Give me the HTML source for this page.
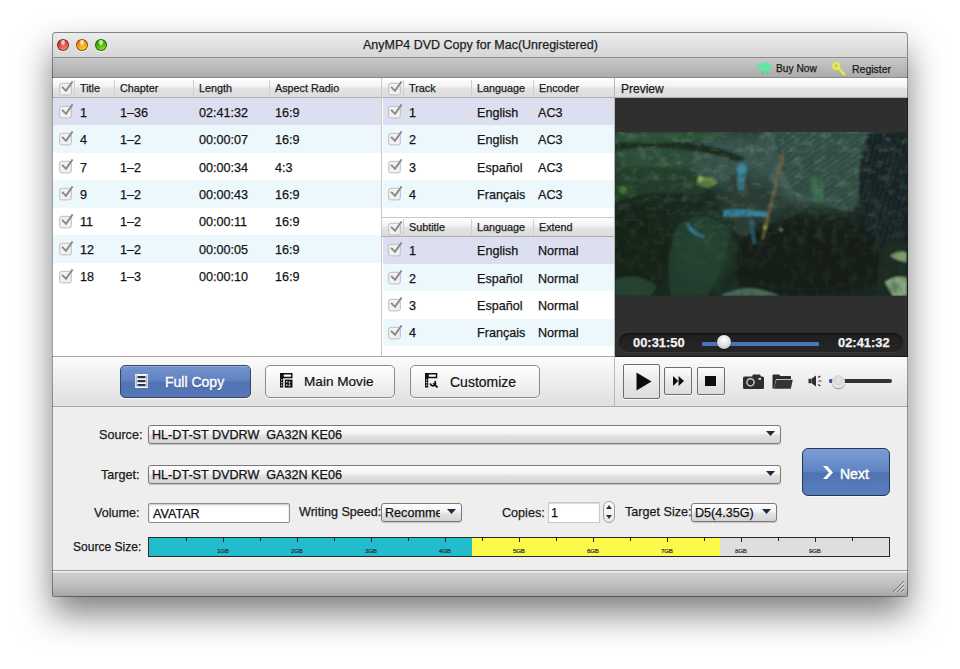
<!DOCTYPE html>
<html><head><meta charset="utf-8">
<style>
html,body{margin:0;padding:0;}
body{width:960px;height:669px;overflow:hidden;background:#fff;position:relative;font-family:"Liberation Sans",sans-serif;color:#111;}
.a{position:absolute;}
.t{position:absolute;white-space:pre;line-height:1;-webkit-text-stroke:0.25px currentColor;}
.light{width:12px;height:12px;border-radius:50%;top:39px;box-shadow:0 1px 1px rgba(255,255,255,.6);}
.hdr{position:absolute;height:20px;background:linear-gradient(#ffffff,#f2f2f2 45%,#e3e3e3 55%,#dcdcdc);border-bottom:1px solid #b0b0b0;box-sizing:border-box;}
.hdiv{position:absolute;width:1px;background:#cfcfcf;}
.row{position:absolute;}
.sel{background:#dcdff0;}
.zeb{background:#edf8fd;}
.wht{background:#fff;}
.cb{position:absolute;width:15px;height:15px;}
.rt{font-size:12.6px;color:#151515;}
.ht{font-size:10.8px;color:#222;}
.btn{position:absolute;border-radius:5px;box-sizing:border-box;}
</style></head><body>
<div class="a" style="left:52px;top:32px;width:856px;height:564px;background:#ececec;border-radius:4px 4px 2px 2px;box-shadow:0 18px 34px rgba(0,0,0,0.5),0 1px 0 0 rgba(0,0,0,0.4);"></div>
<div class="a" style="left:52px;top:32px;width:856px;height:26px;border-radius:4px 4px 0 0;background:linear-gradient(#ececec,#d6d6d6);border:1px solid rgba(0,0,0,0.38);border-bottom:1px solid #8e8e8e;box-sizing:border-box;"></div>
<div class="a" style="left:52px;top:58px;width:856px;height:20px;background:linear-gradient(#c8c8c8,#acacac);border-bottom:1px solid #8a8a8a;box-sizing:border-box;"></div>
<div class="a light" style="left:57px;border:1px solid rgba(90,20,20,.75);box-sizing:border-box;background:radial-gradient(ellipse at 50% 22%,#f6c8c0 0,#f6c8c0 15%,transparent 40%),linear-gradient(160deg,#c81e14,#e4524a 55%,#f3aaa2);"></div>
<div class="a light" style="left:76px;border:1px solid rgba(100,50,0,.75);box-sizing:border-box;background:radial-gradient(ellipse at 50% 22%,#ffe2b0 0,#ffe2b0 15%,transparent 40%),linear-gradient(160deg,#f05a0a,#fb9a18 50%,#f8e838);"></div>
<div class="a light" style="left:95px;border:1px solid rgba(20,70,0,.75);box-sizing:border-box;background:radial-gradient(ellipse at 50% 22%,#c8f0a0 0,#c8f0a0 15%,transparent 40%),linear-gradient(160deg,#2a9a08,#48b010 50%,#b8f020);"></div>
<div class="t" style="left:363px;top:39px;font-size:12.5px;color:#1e1e1e;font-weight:400;">AnyMP4 DVD Copy for Mac(Unregistered)</div>
<svg class="a" style="left:755px;top:62px" width="17" height="13" viewBox="0 0 17 13"><path d="M0.5 1.8 L3.8 2.6 L6 8.2 L13.5 8.2 L16 3.2 L5 3.2" fill="none" stroke="#5ee8a0" stroke-width="1.6" stroke-linejoin="round"/><path d="M5 3.2 L16 3.2 L13.5 8.2 L6 8.2 Z" fill="#5ee8a0"/><rect x="7" y="0.6" width="7" height="2" rx="1" fill="#5ee8a0"/><rect x="6.6" y="9.6" width="2.4" height="2.6" fill="#4cd890"/><rect x="11" y="9.6" width="2.4" height="2.6" fill="#4cd890"/></svg>
<div class="t" style="left:776px;top:64px;font-size:10.2px;color:#1a1a1a;font-weight:400;">Buy Now</div>
<svg class="a" style="left:832px;top:62px" width="14" height="14" viewBox="0 0 14 14"><circle cx="4.2" cy="4" r="2.9" fill="none" stroke="#ecec3c" stroke-width="2.2"/><path d="M6.3 6.2 L12.3 12.4" stroke="#ecec3c" stroke-width="2.4" stroke-linecap="round"/></svg>
<div class="t" style="left:852px;top:64px;font-size:10.5px;color:#1a1a1a;font-weight:400;">Register</div>
<div class="a" style="left:52px;top:78px;width:330px;height:279px;background:#fff;"></div>
<div class="hdr" style="left:52px;top:78px;width:330px;"></div>
<div class="hdiv" style="left:74px;top:80px;height:16px;"></div>
<div class="hdiv" style="left:114px;top:80px;height:16px;"></div>
<div class="hdiv" style="left:193px;top:80px;height:16px;"></div>
<div class="hdiv" style="left:269px;top:80px;height:16px;"></div>
<svg class="cb" style="left:59px;top:80.5px" width="15" height="15" viewBox="0 0 15 15"><rect x="0.7" y="2.3" width="11.6" height="11.6" rx="2" fill="#f1f1f1" stroke="#bdbdbd"/><path d="M3.1 5.9 L7 9.8 L13.6 0.4" fill="none" stroke="#888888" stroke-width="1.9" stroke-linecap="butt" stroke-linejoin="miter"/></svg>
<div class="t" style="left:80px;top:83px;font-size:10.8px;color:#1c1c1c;font-weight:400;">Title</div>
<div class="t" style="left:120px;top:83px;font-size:10.8px;color:#1c1c1c;font-weight:400;">Chapter</div>
<div class="t" style="left:199px;top:83px;font-size:10.8px;color:#1c1c1c;font-weight:400;">Length</div>
<div class="t" style="left:275px;top:83px;font-size:10.8px;color:#1c1c1c;font-weight:400;">Aspect Radio</div>
<div class="row sel" style="left:53px;top:98.00px;width:328px;height:27.45px;"></div>
<svg class="cb" style="left:59px;top:104px" width="15" height="15" viewBox="0 0 15 15"><rect x="0.7" y="2.3" width="11.6" height="11.6" rx="2" fill="#f1f1f1" stroke="#bdbdbd"/><path d="M3.1 5.9 L7 9.8 L13.6 0.4" fill="none" stroke="#888888" stroke-width="1.9" stroke-linecap="butt" stroke-linejoin="miter"/></svg>
<div class="t" style="left:80px;top:106.6px;font-size:12.6px;color:#141414;font-weight:400;">1</div>
<div class="t" style="left:120px;top:106.6px;font-size:12.6px;color:#141414;font-weight:400;">1&#8211;36</div>
<div class="t" style="left:199px;top:106.6px;font-size:12.6px;color:#141414;font-weight:400;">02:41:32</div>
<div class="t" style="left:275px;top:106.6px;font-size:12.6px;color:#141414;font-weight:400;">16:9</div>
<div class="row zeb" style="left:53px;top:125.45px;width:328px;height:27.45px;"></div>
<svg class="cb" style="left:59px;top:131px" width="15" height="15" viewBox="0 0 15 15"><rect x="0.7" y="2.3" width="11.6" height="11.6" rx="2" fill="#f1f1f1" stroke="#bdbdbd"/><path d="M3.1 5.9 L7 9.8 L13.6 0.4" fill="none" stroke="#888888" stroke-width="1.9" stroke-linecap="butt" stroke-linejoin="miter"/></svg>
<div class="t" style="left:80px;top:134.05px;font-size:12.6px;color:#141414;font-weight:400;">4</div>
<div class="t" style="left:120px;top:134.05px;font-size:12.6px;color:#141414;font-weight:400;">1&#8211;2</div>
<div class="t" style="left:199px;top:134.05px;font-size:12.6px;color:#141414;font-weight:400;">00:00:07</div>
<div class="t" style="left:275px;top:134.05px;font-size:12.6px;color:#141414;font-weight:400;">16:9</div>
<div class="row wht" style="left:53px;top:152.90px;width:328px;height:27.45px;"></div>
<svg class="cb" style="left:59px;top:159px" width="15" height="15" viewBox="0 0 15 15"><rect x="0.7" y="2.3" width="11.6" height="11.6" rx="2" fill="#f1f1f1" stroke="#bdbdbd"/><path d="M3.1 5.9 L7 9.8 L13.6 0.4" fill="none" stroke="#888888" stroke-width="1.9" stroke-linecap="butt" stroke-linejoin="miter"/></svg>
<div class="t" style="left:80px;top:161.5px;font-size:12.6px;color:#141414;font-weight:400;">7</div>
<div class="t" style="left:120px;top:161.5px;font-size:12.6px;color:#141414;font-weight:400;">1&#8211;2</div>
<div class="t" style="left:199px;top:161.5px;font-size:12.6px;color:#141414;font-weight:400;">00:00:34</div>
<div class="t" style="left:275px;top:161.5px;font-size:12.6px;color:#141414;font-weight:400;">4:3</div>
<div class="row zeb" style="left:53px;top:180.35px;width:328px;height:27.45px;"></div>
<svg class="cb" style="left:59px;top:186px" width="15" height="15" viewBox="0 0 15 15"><rect x="0.7" y="2.3" width="11.6" height="11.6" rx="2" fill="#f1f1f1" stroke="#bdbdbd"/><path d="M3.1 5.9 L7 9.8 L13.6 0.4" fill="none" stroke="#888888" stroke-width="1.9" stroke-linecap="butt" stroke-linejoin="miter"/></svg>
<div class="t" style="left:80px;top:188.95px;font-size:12.6px;color:#141414;font-weight:400;">9</div>
<div class="t" style="left:120px;top:188.95px;font-size:12.6px;color:#141414;font-weight:400;">1&#8211;2</div>
<div class="t" style="left:199px;top:188.95px;font-size:12.6px;color:#141414;font-weight:400;">00:00:43</div>
<div class="t" style="left:275px;top:188.95px;font-size:12.6px;color:#141414;font-weight:400;">16:9</div>
<div class="row wht" style="left:53px;top:207.80px;width:328px;height:27.45px;"></div>
<svg class="cb" style="left:59px;top:214px" width="15" height="15" viewBox="0 0 15 15"><rect x="0.7" y="2.3" width="11.6" height="11.6" rx="2" fill="#f1f1f1" stroke="#bdbdbd"/><path d="M3.1 5.9 L7 9.8 L13.6 0.4" fill="none" stroke="#888888" stroke-width="1.9" stroke-linecap="butt" stroke-linejoin="miter"/></svg>
<div class="t" style="left:80px;top:216.4px;font-size:12.6px;color:#141414;font-weight:400;">11</div>
<div class="t" style="left:120px;top:216.4px;font-size:12.6px;color:#141414;font-weight:400;">1&#8211;2</div>
<div class="t" style="left:199px;top:216.4px;font-size:12.6px;color:#141414;font-weight:400;">00:00:11</div>
<div class="t" style="left:275px;top:216.4px;font-size:12.6px;color:#141414;font-weight:400;">16:9</div>
<div class="row zeb" style="left:53px;top:235.25px;width:328px;height:27.45px;"></div>
<svg class="cb" style="left:59px;top:241px" width="15" height="15" viewBox="0 0 15 15"><rect x="0.7" y="2.3" width="11.6" height="11.6" rx="2" fill="#f1f1f1" stroke="#bdbdbd"/><path d="M3.1 5.9 L7 9.8 L13.6 0.4" fill="none" stroke="#888888" stroke-width="1.9" stroke-linecap="butt" stroke-linejoin="miter"/></svg>
<div class="t" style="left:80px;top:243.85px;font-size:12.6px;color:#141414;font-weight:400;">12</div>
<div class="t" style="left:120px;top:243.85px;font-size:12.6px;color:#141414;font-weight:400;">1&#8211;2</div>
<div class="t" style="left:199px;top:243.85px;font-size:12.6px;color:#141414;font-weight:400;">00:00:05</div>
<div class="t" style="left:275px;top:243.85px;font-size:12.6px;color:#141414;font-weight:400;">16:9</div>
<div class="row wht" style="left:53px;top:262.70px;width:328px;height:27.45px;"></div>
<svg class="cb" style="left:59px;top:269px" width="15" height="15" viewBox="0 0 15 15"><rect x="0.7" y="2.3" width="11.6" height="11.6" rx="2" fill="#f1f1f1" stroke="#bdbdbd"/><path d="M3.1 5.9 L7 9.8 L13.6 0.4" fill="none" stroke="#888888" stroke-width="1.9" stroke-linecap="butt" stroke-linejoin="miter"/></svg>
<div class="t" style="left:80px;top:271.3px;font-size:12.6px;color:#141414;font-weight:400;">18</div>
<div class="t" style="left:120px;top:271.3px;font-size:12.6px;color:#141414;font-weight:400;">1&#8211;3</div>
<div class="t" style="left:199px;top:271.3px;font-size:12.6px;color:#141414;font-weight:400;">00:00:10</div>
<div class="t" style="left:275px;top:271.3px;font-size:12.6px;color:#141414;font-weight:400;">16:9</div>
<div class="a" style="left:381px;top:78px;width:1px;height:279px;background:#c9c9c9;"></div>
<div class="a" style="left:382px;top:78px;width:232px;height:279px;background:#fff;"></div>
<div class="hdr" style="left:382px;top:78px;width:232px;"></div>
<div class="hdiv" style="left:403px;top:80px;height:16px;"></div>
<div class="hdiv" style="left:471px;top:80px;height:16px;"></div>
<div class="hdiv" style="left:533px;top:80px;height:16px;"></div>
<svg class="cb" style="left:388px;top:80.5px" width="15" height="15" viewBox="0 0 15 15"><rect x="0.7" y="2.3" width="11.6" height="11.6" rx="2" fill="#f1f1f1" stroke="#bdbdbd"/><path d="M3.1 5.9 L7 9.8 L13.6 0.4" fill="none" stroke="#888888" stroke-width="1.9" stroke-linecap="butt" stroke-linejoin="miter"/></svg>
<div class="t" style="left:409px;top:83px;font-size:10.8px;color:#1c1c1c;font-weight:400;">Track</div>
<div class="t" style="left:477px;top:83px;font-size:10.8px;color:#1c1c1c;font-weight:400;">Language</div>
<div class="t" style="left:539px;top:83px;font-size:10.8px;color:#1c1c1c;font-weight:400;">Encoder</div>
<div class="row sel" style="left:383px;top:98.00px;width:231px;height:27.45px;"></div>
<svg class="cb" style="left:388px;top:104px" width="15" height="15" viewBox="0 0 15 15"><rect x="0.7" y="2.3" width="11.6" height="11.6" rx="2" fill="#f1f1f1" stroke="#bdbdbd"/><path d="M3.1 5.9 L7 9.8 L13.6 0.4" fill="none" stroke="#888888" stroke-width="1.9" stroke-linecap="butt" stroke-linejoin="miter"/></svg>
<div class="t" style="left:409px;top:106.6px;font-size:12.6px;color:#141414;font-weight:400;">1</div>
<div class="t" style="left:477px;top:106.6px;font-size:12.6px;color:#141414;font-weight:400;">English</div>
<div class="t" style="left:538px;top:106.6px;font-size:12.6px;color:#141414;font-weight:400;">AC3</div>
<div class="row zeb" style="left:383px;top:125.45px;width:231px;height:27.45px;"></div>
<svg class="cb" style="left:388px;top:131px" width="15" height="15" viewBox="0 0 15 15"><rect x="0.7" y="2.3" width="11.6" height="11.6" rx="2" fill="#f1f1f1" stroke="#bdbdbd"/><path d="M3.1 5.9 L7 9.8 L13.6 0.4" fill="none" stroke="#888888" stroke-width="1.9" stroke-linecap="butt" stroke-linejoin="miter"/></svg>
<div class="t" style="left:409px;top:134.05px;font-size:12.6px;color:#141414;font-weight:400;">2</div>
<div class="t" style="left:477px;top:134.05px;font-size:12.6px;color:#141414;font-weight:400;">English</div>
<div class="t" style="left:538px;top:134.05px;font-size:12.6px;color:#141414;font-weight:400;">AC3</div>
<div class="row wht" style="left:383px;top:152.90px;width:231px;height:27.45px;"></div>
<svg class="cb" style="left:388px;top:159px" width="15" height="15" viewBox="0 0 15 15"><rect x="0.7" y="2.3" width="11.6" height="11.6" rx="2" fill="#f1f1f1" stroke="#bdbdbd"/><path d="M3.1 5.9 L7 9.8 L13.6 0.4" fill="none" stroke="#888888" stroke-width="1.9" stroke-linecap="butt" stroke-linejoin="miter"/></svg>
<div class="t" style="left:409px;top:161.5px;font-size:12.6px;color:#141414;font-weight:400;">3</div>
<div class="t" style="left:477px;top:161.5px;font-size:12.6px;color:#141414;font-weight:400;">Espa&#241;ol</div>
<div class="t" style="left:538px;top:161.5px;font-size:12.6px;color:#141414;font-weight:400;">AC3</div>
<div class="row zeb" style="left:383px;top:180.35px;width:231px;height:27.45px;"></div>
<svg class="cb" style="left:388px;top:186px" width="15" height="15" viewBox="0 0 15 15"><rect x="0.7" y="2.3" width="11.6" height="11.6" rx="2" fill="#f1f1f1" stroke="#bdbdbd"/><path d="M3.1 5.9 L7 9.8 L13.6 0.4" fill="none" stroke="#888888" stroke-width="1.9" stroke-linecap="butt" stroke-linejoin="miter"/></svg>
<div class="t" style="left:409px;top:188.95px;font-size:12.6px;color:#141414;font-weight:400;">4</div>
<div class="t" style="left:477px;top:188.95px;font-size:12.6px;color:#141414;font-weight:400;">Fran&#231;ais</div>
<div class="t" style="left:538px;top:188.95px;font-size:12.6px;color:#141414;font-weight:400;">AC3</div>
<div class="hdr" style="left:382px;top:217px;width:232px;border-top:1px solid #c8c8c8;height:20px;"></div>
<div class="hdiv" style="left:403px;top:219px;height:16px;"></div>
<div class="hdiv" style="left:471px;top:219px;height:16px;"></div>
<div class="hdiv" style="left:533px;top:219px;height:16px;"></div>
<svg class="cb" style="left:388px;top:220.5px" width="15" height="15" viewBox="0 0 15 15"><rect x="0.7" y="2.3" width="11.6" height="11.6" rx="2" fill="#f1f1f1" stroke="#bdbdbd"/><path d="M3.1 5.9 L7 9.8 L13.6 0.4" fill="none" stroke="#888888" stroke-width="1.9" stroke-linecap="butt" stroke-linejoin="miter"/></svg>
<div class="t" style="left:409px;top:222px;font-size:10.8px;color:#1c1c1c;font-weight:400;">Subtitle</div>
<div class="t" style="left:477px;top:222px;font-size:10.8px;color:#1c1c1c;font-weight:400;">Language</div>
<div class="t" style="left:539px;top:222px;font-size:10.8px;color:#1c1c1c;font-weight:400;">Extend</div>
<div class="row sel" style="left:383px;top:236.50px;width:231px;height:27.45px;"></div>
<svg class="cb" style="left:388px;top:242px" width="15" height="15" viewBox="0 0 15 15"><rect x="0.7" y="2.3" width="11.6" height="11.6" rx="2" fill="#f1f1f1" stroke="#bdbdbd"/><path d="M3.1 5.9 L7 9.8 L13.6 0.4" fill="none" stroke="#888888" stroke-width="1.9" stroke-linecap="butt" stroke-linejoin="miter"/></svg>
<div class="t" style="left:409px;top:245.1px;font-size:12.6px;color:#141414;font-weight:400;">1</div>
<div class="t" style="left:477px;top:245.1px;font-size:12.6px;color:#141414;font-weight:400;">English</div>
<div class="t" style="left:538px;top:245.1px;font-size:12.6px;color:#141414;font-weight:400;">Normal</div>
<div class="row zeb" style="left:383px;top:263.95px;width:231px;height:27.45px;"></div>
<svg class="cb" style="left:388px;top:270px" width="15" height="15" viewBox="0 0 15 15"><rect x="0.7" y="2.3" width="11.6" height="11.6" rx="2" fill="#f1f1f1" stroke="#bdbdbd"/><path d="M3.1 5.9 L7 9.8 L13.6 0.4" fill="none" stroke="#888888" stroke-width="1.9" stroke-linecap="butt" stroke-linejoin="miter"/></svg>
<div class="t" style="left:409px;top:272.55px;font-size:12.6px;color:#141414;font-weight:400;">2</div>
<div class="t" style="left:477px;top:272.55px;font-size:12.6px;color:#141414;font-weight:400;">Espa&#241;ol</div>
<div class="t" style="left:538px;top:272.55px;font-size:12.6px;color:#141414;font-weight:400;">Normal</div>
<div class="row wht" style="left:383px;top:291.40px;width:231px;height:27.45px;"></div>
<svg class="cb" style="left:388px;top:297px" width="15" height="15" viewBox="0 0 15 15"><rect x="0.7" y="2.3" width="11.6" height="11.6" rx="2" fill="#f1f1f1" stroke="#bdbdbd"/><path d="M3.1 5.9 L7 9.8 L13.6 0.4" fill="none" stroke="#888888" stroke-width="1.9" stroke-linecap="butt" stroke-linejoin="miter"/></svg>
<div class="t" style="left:409px;top:300.0px;font-size:12.6px;color:#141414;font-weight:400;">3</div>
<div class="t" style="left:477px;top:300.0px;font-size:12.6px;color:#141414;font-weight:400;">Espa&#241;ol</div>
<div class="t" style="left:538px;top:300.0px;font-size:12.6px;color:#141414;font-weight:400;">Normal</div>
<div class="row zeb" style="left:383px;top:318.85px;width:231px;height:27.45px;"></div>
<svg class="cb" style="left:388px;top:325px" width="15" height="15" viewBox="0 0 15 15"><rect x="0.7" y="2.3" width="11.6" height="11.6" rx="2" fill="#f1f1f1" stroke="#bdbdbd"/><path d="M3.1 5.9 L7 9.8 L13.6 0.4" fill="none" stroke="#888888" stroke-width="1.9" stroke-linecap="butt" stroke-linejoin="miter"/></svg>
<div class="t" style="left:409px;top:327.45px;font-size:12.6px;color:#141414;font-weight:400;">4</div>
<div class="t" style="left:477px;top:327.45px;font-size:12.6px;color:#141414;font-weight:400;">Fran&#231;ais</div>
<div class="t" style="left:538px;top:327.45px;font-size:12.6px;color:#141414;font-weight:400;">Normal</div>
<div class="a" style="left:614px;top:78px;width:1px;height:329px;background:#b8b8b8;"></div>
<div class="hdr" style="left:615px;top:78px;width:293px;"></div>
<div class="t" style="left:621px;top:83px;font-size:12px;color:#1c1c1c;font-weight:400;">Preview</div>
<div class="a" style="left:615px;top:98px;width:293px;height:259px;background:#2f2f2f;"></div>
<svg class="a" style="left:615px;top:132px" width="292" height="164" viewBox="0 0 292 164">
<defs>
<filter id="bl" x="-30%" y="-30%" width="160%" height="160%"><feGaussianBlur stdDeviation="7"/></filter>
<filter id="bl2" x="-10%" y="-10%" width="120%" height="120%"><feGaussianBlur stdDeviation="1.1"/></filter>
<filter id="noise" x="0" y="0" width="100%" height="100%"><feTurbulence type="fractalNoise" baseFrequency="0.09 0.14" numOctaves="3" seed="7"/><feColorMatrix type="matrix" values="0 0 0 0 0.40  0 0 0 0 0.60  0 0 0 0 0.48  0 0 0 2.2 -1.05"/></filter>
<filter id="noise2" x="0" y="0" width="100%" height="100%"><feTurbulence type="fractalNoise" baseFrequency="0.12 0.08" numOctaves="2" seed="3"/><feColorMatrix type="matrix" values="0 0 0 0 0.02  0 0 0 0 0.05  0 0 0 0 0.04  0 0 0 2.4 -1.1"/></filter>
<pattern id="fern" width="6" height="5" patternUnits="userSpaceOnUse" patternTransform="rotate(-35)"><rect width="6" height="5" fill="#304c42"/><rect width="6" height="1.5" fill="#3f5e52"/></pattern>
<pattern id="fern2" width="5" height="4" patternUnits="userSpaceOnUse" patternTransform="rotate(30)"><rect width="5" height="4" fill="#213c2c"/><rect width="5" height="1.3" fill="#325440"/></pattern>
<pattern id="frond" width="5" height="8" patternUnits="userSpaceOnUse" patternTransform="rotate(15)"><rect width="5" height="8" fill="#161e20"/><rect width="1.4" height="8" fill="#233034"/></pattern>
<linearGradient id="tg" x1="0" y1="0" x2="0" y2="1"><stop offset="0" stop-color="#fff"/><stop offset="0.55" stop-color="#888"/><stop offset="0.8" stop-color="#222"/><stop offset="1" stop-color="#000"/></linearGradient>
<mask id="topm"><rect width="292" height="164" fill="url(#tg)"/></mask>
</defs>
<rect width="292" height="164" fill="#1b2a22"/>
<g filter="url(#bl)">
<ellipse cx="205" cy="30" rx="80" ry="42" fill="#4b6662"/>
<ellipse cx="120" cy="28" rx="50" ry="28" fill="#3a5650"/>
<ellipse cx="40" cy="25" rx="45" ry="22" fill="#2e5038"/>
<ellipse cx="140" cy="70" rx="35" ry="25" fill="#2a3e36"/>
<ellipse cx="190" cy="125" rx="95" ry="40" fill="#121c16"/>
<ellipse cx="25" cy="115" rx="40" ry="45" fill="#152419"/>
<ellipse cx="90" cy="120" rx="28" ry="35" fill="#22402c"/>
</g>
<g filter="url(#bl2)">
<path d="M0 8 Q60 -2 130 26 L128 31 Q60 8 0 18 Z" fill="#1a2a1e"/>
<path d="M0 0 L120 0 Q80 14 0 10 Z" fill="#3e6a48" opacity="0.6"/>
<path d="M0 38 Q50 28 95 46 Q100 56 82 64 Q40 56 0 70 Z" fill="#24402a" opacity="0.85"/>
<path d="M20 68 Q60 60 100 76 L96 80 Q60 68 20 76 Z" fill="#182a1e"/>
<path d="M160 0 L250 0 Q255 40 238 80 Q205 75 180 60 Q158 30 160 0 Z" fill="url(#fern)"/>
<path d="M64 92 Q92 76 116 98 Q108 140 92 164 L56 164 Q48 125 64 92 Z" fill="url(#fern2)" opacity="0.7"/>
<path d="M252 2 Q280 -2 292 6 L292 118 Q262 118 248 92 Q238 45 252 2 Z" fill="url(#frond)"/>
<ellipse cx="92" cy="50" rx="10" ry="5" fill="#7a9a48" opacity="0.75"/>
<circle cx="86" cy="47" r="3" fill="#b0c870" opacity="0.8"/>
<circle cx="8" cy="58" r="4" fill="#4c8a34" opacity="0.7"/>
<path d="M116 44 Q126 38 134 46 L136 100 Q128 108 120 100 Z" fill="#2e3e30"/>
<ellipse cx="127" cy="37" rx="5" ry="6" fill="#3e8aa0"/>
<path d="M122 42 L131 42 L129 58 L123 58 Z" fill="#337488"/>
<path d="M108 78 Q130 76 154 80 L154 85 Q130 84 108 85 Z" fill="#377f96"/>
<path d="M134 87 L139 87 L141 112 L137 112 Z" fill="#2a5f72" opacity="0.8"/>
<path d="M73 90 Q78 100 90 104 L88 106 Q75 103 71 92 Z" fill="#327a94"/>
<path d="M167 20 L170 21 L149 108 L146 107 Z" fill="#6a5a38"/>
<path d="M196 48 Q204 44 210 52 L207 70 L199 70 Z" fill="#3e6a50"/>
<circle cx="150" cy="95" r="2.5" fill="#a0b050" opacity="0.7"/>
<circle cx="166" cy="98" r="2" fill="#a0b050" opacity="0.6"/>
<path d="M105 164 Q132 148 165 164 Z" fill="#4a6a5a"/>
<path d="M268 112 Q282 104 292 110 L292 164 L266 164 Q258 140 268 112 Z" fill="#1c2c22"/>
<path d="M270 150 Q282 142 292 146 L292 164 L278 164 Z" fill="#8aa880"/>
<path d="M275 124 Q285 117 292 121 L292 130 Q283 129 275 124 Z" fill="#7e9c70"/>
<path d="M0 148 Q20 138 42 154 L36 164 L0 164 Z" fill="#2a4a3a" opacity="0.8"/>
</g>
<rect width="292" height="164" filter="url(#noise)" opacity="0.3" mask="url(#topm)"/>
<rect width="292" height="164" filter="url(#noise2)" opacity="0.45"/>
</svg>
<div class="a" style="left:619px;top:333px;width:284px;height:19px;border-radius:9.5px;background:linear-gradient(#1f1f1f,#262626);box-shadow:inset 0 1px 2px rgba(0,0,0,.6),0 1px 0 rgba(255,255,255,.06);"></div>
<div class="t" style="left:633px;top:337px;font-size:12.9px;color:#f2f2f2;font-weight:700;">00:31:50</div>
<div class="t" style="left:838px;top:337px;font-size:12.9px;color:#f2f2f2;font-weight:700;">02:41:32</div>
<div class="a" style="left:702px;top:342px;width:117px;height:3.5px;background:#4b76b6;border-radius:1px;"></div>
<div class="a" style="left:717px;top:335px;width:14px;height:14px;border-radius:50%;background:radial-gradient(circle at 50% 35%,#ffffff,#d8d8d8 60%,#9a9a9a);box-shadow:0 1px 2px rgba(0,0,0,.6);"></div>
<div class="a" style="left:615px;top:357px;width:293px;height:50px;background:linear-gradient(#fbfbfb,#f0f0f0 40%,#dedede);"></div>
<div class="a" style="left:623px;top:364px;width:37px;height:35px;border:1px solid #6e6e6e;border-radius:2px;background:linear-gradient(#fdfdfd,#e9e9e9 50%,#dcdcdc);box-sizing:border-box;box-shadow:0 1px 0 rgba(255,255,255,.7);"></div>
<div class="a" style="left:664px;top:367px;width:28px;height:28px;border:1px solid #6e6e6e;border-radius:2px;background:linear-gradient(#fdfdfd,#e9e9e9 50%,#dcdcdc);box-sizing:border-box;box-shadow:0 1px 0 rgba(255,255,255,.7);"></div>
<div class="a" style="left:697px;top:367px;width:28px;height:28px;border:1px solid #6e6e6e;border-radius:2px;background:linear-gradient(#fdfdfd,#e9e9e9 50%,#dcdcdc);box-sizing:border-box;box-shadow:0 1px 0 rgba(255,255,255,.7);"></div>
<svg class="a" style="left:636px;top:372px" width="16" height="19" viewBox="0 0 16 19"><path d="M0.5 0.5 L15.5 9.5 L0.5 18.5 Z" fill="#0c0c0c"/></svg>
<svg class="a" style="left:673px;top:376px" width="11" height="10" viewBox="0 0 11 10"><path d="M0 0 L5.2 5 L0 10 Z M5.6 0 L11 5 L5.6 10 Z" fill="#0c0c0c"/></svg>
<div class="a" style="left:705px;top:376px;width:11px;height:10px;background:#0c0c0c;"></div>
<svg class="a" style="left:743px;top:374px" width="21" height="15" viewBox="0 0 21 15"><path d="M0 4 Q0 2.5 1.5 2.5 L9 2.5 L10 0.5 L17 0.5 L18 2.5 L19.5 2.5 Q21 2.5 21 4 L21 13.5 Q21 15 19.5 15 L1.5 15 Q0 15 0 13.5 Z" fill="#2e2e2e"/><circle cx="7.5" cy="8.3" r="3.6" fill="none" stroke="#cfcfcf" stroke-width="1.4"/><rect x="15.5" y="4" width="2.5" height="1.8" fill="#e0e0e0"/></svg>
<svg class="a" style="left:772px;top:374px" width="21" height="15" viewBox="0 0 21 15"><path d="M0.5 1.5 Q0.5 0.5 1.5 0.5 L7 0.5 L8.5 2 L18 2 Q19 2 19 3 L19 5 L4 5 L2 14.5 L0.5 14.5 Z" fill="#2a2a2a"/><path d="M4.3 5.8 L20.8 5.8 L18.8 14.8 L2 14.8 Z" fill="#333"/></svg>
<svg class="a" style="left:808px;top:375px" width="16" height="12" viewBox="0 0 16 12"><rect x="0.5" y="3.8" width="2.8" height="4.4" fill="#2e2e2e"/><path d="M3.5 3.8 L8 0.5 L8 11.5 L3.5 8.2 Z" fill="#2e2e2e"/><path d="M10 2.5 L12.5 1 M10.5 6 L13.5 6 M10 9.5 L12.5 11" stroke="#333" stroke-width="1.2"/></svg>
<div class="a" style="left:829px;top:379px;width:63px;height:4px;background:#333;border-radius:2px;"></div>
<div class="a" style="left:829px;top:379px;width:8px;height:4px;background:#3e5f9e;border-radius:2px;"></div>
<div class="a" style="left:832px;top:375px;width:13px;height:13px;border-radius:50%;background:radial-gradient(circle at 50% 40%,#e8e8e8,#d6d6d6 45%,#f4f4f4 70%,#a0a0a0);box-shadow:0 1px 1px rgba(0,0,0,.45);"></div>
<div class="a" style="left:52px;top:356px;width:562px;height:1px;background:#a8a8a8;"></div>
<div class="a" style="left:615px;top:356px;width:293px;height:1px;background:#1a1a1a;"></div>
<div class="a" style="left:52px;top:357px;width:562px;height:50px;background:linear-gradient(#fbfbfb,#f0f0f0 40%,#dedede);"></div>
<div class="a" style="left:52px;top:406px;width:856px;height:1px;background:#a9a9a9;"></div>
<div class="a" style="left:120px;top:365px;width:131px;height:33px;border:1px solid #3a4660;border-radius:5px;background:linear-gradient(#7394cc,#6283c2 45%,#5173b3 55%,#5678b7);box-sizing:border-box;box-shadow:0 1px 1px rgba(255,255,255,.8),inset 0 1px 0 rgba(255,255,255,.25);"></div>
<svg class="a" style="left:135px;top:374px" width="13" height="14" viewBox="0 0 13 14"><rect x="0" y="0" width="13" height="14" fill="#f4f5f8"/><rect x="2.5" y="2" width="8" height="2.2" fill="#27364f"/><rect x="2.5" y="6" width="8" height="2.2" fill="#27364f"/><rect x="2.5" y="10" width="8" height="2.2" fill="#27364f"/><rect x="0.7" y="1" width="1" height="12" fill="#9aa4b8"/><rect x="11.3" y="1" width="1" height="12" fill="#9aa4b8"/></svg>
<div class="t" style="left:165px;top:375px;font-size:14px;color:#ffffff;font-weight:400;text-shadow:0 1px 1px rgba(0,0,0,.35);-webkit-text-stroke:0.4px #fff;">Full Copy</div>
<div class="a" style="left:265px;top:365px;width:130px;height:33px;border:1px solid #8a8a8a;border-radius:5px;background:linear-gradient(#ffffff,#f4f4f4 50%,#e6e6e6);box-sizing:border-box;box-shadow:0 1px 1px rgba(255,255,255,.8);"></div>
<svg class="a" style="left:280px;top:373px" width="13" height="15" viewBox="0 0 13 15"><path d="M0 0 H12.5 V5.2 H3.2 V14.5 H0 Z" fill="#111"/><rect x="3.6" y="1.4" width="7.6" height="2.4" rx="1" fill="#fff"/><rect x="1.1" y="6.3" width="1.1" height="1.2" fill="#fff"/><rect x="1.1" y="9" width="1.1" height="1.2" fill="#fff"/><rect x="1.1" y="11.7" width="1.1" height="1.2" fill="#fff"/><rect x="4.8" y="6.6" width="7.7" height="8" fill="#111"/><rect x="6.2" y="8" width="1.2" height="1.5" fill="#fff"/><rect x="6.2" y="11.3" width="1.2" height="1.5" fill="#fff"/><rect x="8.7" y="8.5" width="1.6" height="1.8" fill="#ddd"/><rect x="8.7" y="11.5" width="1.6" height="1.8" fill="#ddd"/></svg>
<div class="t" style="left:304px;top:375px;font-size:13.6px;color:#111;font-weight:400;-webkit-text-stroke:0.2px #111;">Main Movie</div>
<div class="a" style="left:410px;top:365px;width:130px;height:33px;border:1px solid #8a8a8a;border-radius:5px;background:linear-gradient(#ffffff,#f4f4f4 50%,#e6e6e6);box-sizing:border-box;box-shadow:0 1px 1px rgba(255,255,255,.8);"></div>
<svg class="a" style="left:425px;top:373px" width="13" height="15" viewBox="0 0 13 15"><path d="M0 0 H12.3 V5.2 H3.2 V14.5 H0 Z" fill="#111"/><rect x="3.6" y="1.4" width="7.4" height="2.4" rx="1" fill="#fff"/><rect x="1.1" y="6.3" width="1.1" height="1.2" fill="#fff"/><rect x="1.1" y="9" width="1.1" height="1.2" fill="#fff"/><rect x="1.1" y="11.7" width="1.1" height="1.2" fill="#fff"/><path d="M5.3 10.4 A2.6 2.6 0 1 0 9.6 8.2" fill="none" stroke="#111" stroke-width="1.7"/><path d="M8.8 10.8 L12 13.9" stroke="#111" stroke-width="1.9" stroke-linecap="round"/></svg>
<div class="t" style="left:450px;top:375px;font-size:14px;color:#111;font-weight:400;-webkit-text-stroke:0.2px #111;">Customize</div>
<div class="a" style="left:52px;top:407px;width:856px;height:163px;background:#eeeeee;"></div>
<div class="t" style="left:99px;top:429px;font-size:12.6px;color:#1a1a1a;font-weight:400;">Source:</div>
<div class="a" style="left:148px;top:425px;width:633px;height:19px;border:1px solid #7a7a7a;border-radius:3px;background:linear-gradient(#fefefe,#f3f3f3 45%,#e2e2e2 55%,#d4d4d4);box-sizing:border-box;box-shadow:0 1px 1px rgba(0,0,0,.18);"></div>
<div class="t" style="left:152px;top:428.5px;font-size:12.6px;color:#111;font-weight:400;">HL-DT-ST DVDRW  GA32N KE06</div>
<svg class="a" style="left:766px;top:431px" width="9" height="5" viewBox="0 0 9 5"><path d="M0 0 L9 0 L4.5 5 Z" fill="#1c2a40"/></svg>
<div class="t" style="left:101px;top:469px;font-size:12.6px;color:#1a1a1a;font-weight:400;">Target:</div>
<div class="a" style="left:148px;top:465px;width:633px;height:19px;border:1px solid #7a7a7a;border-radius:3px;background:linear-gradient(#fefefe,#f3f3f3 45%,#e2e2e2 55%,#d4d4d4);box-sizing:border-box;box-shadow:0 1px 1px rgba(0,0,0,.18);"></div>
<div class="t" style="left:152px;top:468.5px;font-size:12.6px;color:#111;font-weight:400;">HL-DT-ST DVDRW  GA32N KE06</div>
<svg class="a" style="left:766px;top:471px" width="9" height="5" viewBox="0 0 9 5"><path d="M0 0 L9 0 L4.5 5 Z" fill="#1c2a40"/></svg>
<div class="t" style="left:94px;top:507px;font-size:12.6px;color:#1a1a1a;font-weight:400;">Volume:</div>
<div class="a" style="left:148px;top:503px;width:142px;height:20px;border:1px solid #8e8e8e;border-radius:2px;background:#fff;box-sizing:border-box;box-shadow:inset 0 1px 2px rgba(0,0,0,.25);"></div>
<div class="t" style="left:153px;top:508px;font-size:12.6px;color:#111;font-weight:400;">AVATAR</div>
<div class="t" style="left:299px;top:506px;font-size:12.6px;color:#1a1a1a;font-weight:400;">Writing Speed:</div>
<div class="a" style="left:381px;top:503px;width:81px;height:19px;border:1px solid #7a7a7a;border-radius:3px;background:linear-gradient(#fefefe,#f3f3f3 45%,#e2e2e2 55%,#d4d4d4);box-sizing:border-box;box-shadow:0 1px 1px rgba(0,0,0,.18);"></div>
<div class="t" style="left:385px;top:506.5px;font-size:12.6px;color:#111;font-weight:400;width:55px;overflow:hidden;">Recomme</div>
<svg class="a" style="left:447px;top:509px" width="9" height="5" viewBox="0 0 9 5"><path d="M0 0 L9 0 L4.5 5 Z" fill="#1c2a40"/></svg>
<div class="t" style="left:502px;top:507px;font-size:12.6px;color:#1a1a1a;font-weight:400;">Copies:</div>
<div class="a" style="left:548px;top:502px;width:52px;height:21px;border:1px solid #c8c8c8;background:#fff;box-sizing:border-box;box-shadow:inset 0 1px 1px rgba(0,0,0,.15);"></div>
<div class="t" style="left:551px;top:507px;font-size:12.6px;color:#111;font-weight:400;">1</div>
<div class="a" style="left:603px;top:501px;width:12px;height:22px;border:1px solid #a0a0a0;border-radius:6px;background:linear-gradient(#fff,#e8e8e8);box-sizing:border-box;"></div>
<svg class="a" style="left:606px;top:505px" width="6" height="14" viewBox="0 0 6 14"><path d="M0 4 L3 0 L6 4 Z M0 10 L3 14 L6 10 Z" fill="#333"/></svg>
<div class="t" style="left:625px;top:506px;font-size:12.6px;color:#1a1a1a;font-weight:400;">Target Size:</div>
<div class="a" style="left:691px;top:503px;width:86px;height:19px;border:1px solid #7a7a7a;border-radius:3px;background:linear-gradient(#fefefe,#f3f3f3 45%,#e2e2e2 55%,#d4d4d4);box-sizing:border-box;box-shadow:0 1px 1px rgba(0,0,0,.18);"></div>
<div class="t" style="left:695px;top:506.5px;font-size:12.6px;color:#111;font-weight:400;">D5(4.35G)</div>
<svg class="a" style="left:762px;top:509px" width="9" height="5" viewBox="0 0 9 5"><path d="M0 0 L9 0 L4.5 5 Z" fill="#1c2a40"/></svg>
<div class="a" style="left:802px;top:448px;width:88px;height:48px;border:1px solid #2a3550;border-radius:6px;background:linear-gradient(#7c9dd4,#6085c4 48%,#4f72b2 52%,#5a7fbe);box-sizing:border-box;box-shadow:0 1px 1px rgba(255,255,255,.7);"></div>
<svg class="a" style="left:822px;top:465px" width="12" height="15" viewBox="0 0 12 15"><path d="M1 1 L5 1 L11 7.5 L5 14 L1 14 L7 7.5 Z" fill="#ffffff"/></svg>
<div class="t" style="left:840px;top:467px;font-size:14px;color:#ffffff;font-weight:400;text-shadow:0 1px 1px rgba(0,0,0,.3);-webkit-text-stroke:0.5px #fff;">Next</div>
<div class="t" style="left:73px;top:541px;font-size:12.05px;color:#1a1a1a;font-weight:400;">Source Size:</div>
<div class="a" style="left:148px;top:537px;width:742px;height:20px;border:1px solid #2a2a2a;background:#dedede;box-sizing:border-box;"></div>
<div class="a" style="left:149px;top:538px;width:323px;height:18px;background:#22bccc;"></div>
<div class="a" style="left:472px;top:538px;width:248px;height:18px;background:#fbf94a;"></div>
<div class="a" style="left:186px;top:538px;width:1px;height:3px;background:#222;"></div>
<div class="a" style="left:223px;top:538px;width:1px;height:4px;background:#222;"></div>
<div class="a" style="left:260px;top:538px;width:1px;height:3px;background:#222;"></div>
<div class="a" style="left:297px;top:538px;width:1px;height:4px;background:#222;"></div>
<div class="a" style="left:334px;top:538px;width:1px;height:3px;background:#222;"></div>
<div class="a" style="left:371px;top:538px;width:1px;height:4px;background:#222;"></div>
<div class="a" style="left:408px;top:538px;width:1px;height:3px;background:#222;"></div>
<div class="a" style="left:445px;top:538px;width:1px;height:4px;background:#222;"></div>
<div class="a" style="left:482px;top:538px;width:1px;height:3px;background:#222;"></div>
<div class="a" style="left:519px;top:538px;width:1px;height:4px;background:#222;"></div>
<div class="a" style="left:556px;top:538px;width:1px;height:3px;background:#222;"></div>
<div class="a" style="left:593px;top:538px;width:1px;height:4px;background:#222;"></div>
<div class="a" style="left:630px;top:538px;width:1px;height:3px;background:#222;"></div>
<div class="a" style="left:667px;top:538px;width:1px;height:4px;background:#222;"></div>
<div class="a" style="left:704px;top:538px;width:1px;height:3px;background:#222;"></div>
<div class="a" style="left:741px;top:538px;width:1px;height:4px;background:#222;"></div>
<div class="a" style="left:778px;top:538px;width:1px;height:3px;background:#222;"></div>
<div class="a" style="left:815px;top:538px;width:1px;height:4px;background:#222;"></div>
<div class="a" style="left:852px;top:538px;width:1px;height:3px;background:#222;"></div>
<div class="t" style="left:217px;top:548px;font-size:6.2px;color:#2a2f3a;font-weight:400;letter-spacing:-0.3px;-webkit-text-stroke:0.2px #2a2f3a;">1GB</div>
<div class="t" style="left:291px;top:548px;font-size:6.2px;color:#2a2f3a;font-weight:400;letter-spacing:-0.3px;-webkit-text-stroke:0.2px #2a2f3a;">2GB</div>
<div class="t" style="left:365px;top:548px;font-size:6.2px;color:#2a2f3a;font-weight:400;letter-spacing:-0.3px;-webkit-text-stroke:0.2px #2a2f3a;">3GB</div>
<div class="t" style="left:439px;top:548px;font-size:6.2px;color:#2a2f3a;font-weight:400;letter-spacing:-0.3px;-webkit-text-stroke:0.2px #2a2f3a;">4GB</div>
<div class="t" style="left:513px;top:548px;font-size:6.2px;color:#2a2f3a;font-weight:400;letter-spacing:-0.3px;-webkit-text-stroke:0.2px #2a2f3a;">5GB</div>
<div class="t" style="left:587px;top:548px;font-size:6.2px;color:#2a2f3a;font-weight:400;letter-spacing:-0.3px;-webkit-text-stroke:0.2px #2a2f3a;">6GB</div>
<div class="t" style="left:661px;top:548px;font-size:6.2px;color:#2a2f3a;font-weight:400;letter-spacing:-0.3px;-webkit-text-stroke:0.2px #2a2f3a;">7GB</div>
<div class="t" style="left:735px;top:548px;font-size:6.2px;color:#2a2f3a;font-weight:400;letter-spacing:-0.3px;-webkit-text-stroke:0.2px #2a2f3a;">8GB</div>
<div class="t" style="left:809px;top:548px;font-size:6.2px;color:#2a2f3a;font-weight:400;letter-spacing:-0.3px;-webkit-text-stroke:0.2px #2a2f3a;">9GB</div>
<div class="a" style="left:52px;top:570px;width:856px;height:26px;border-top:1px solid #9a9a9a;background:linear-gradient(#f2f2f2,#f2f2f2 1px,#cfcfcf 2px,#bebebe 60%,#a6a6a6);box-sizing:border-box;border-radius:0 0 2px 2px;"></div>
<svg class="a" style="left:891px;top:579px" width="14" height="14" viewBox="0 0 14 14"><path d="M13 2 L2 13 M13 6 L6 13 M13 10 L10 13" stroke="#6a6a6a" stroke-width="1"/><path d="M13.5 3 L3 13.5 M13.5 7 L7 13.5 M13.5 11 L11 13.5" stroke="#f4f4f4" stroke-width="0.8"/></svg>
<div class="a" style="left:52px;top:58px;width:1px;height:538px;background:rgba(0,0,0,0.38);"></div>
<div class="a" style="left:907px;top:58px;width:1px;height:538px;background:rgba(0,0,0,0.38);"></div>
</body></html>
